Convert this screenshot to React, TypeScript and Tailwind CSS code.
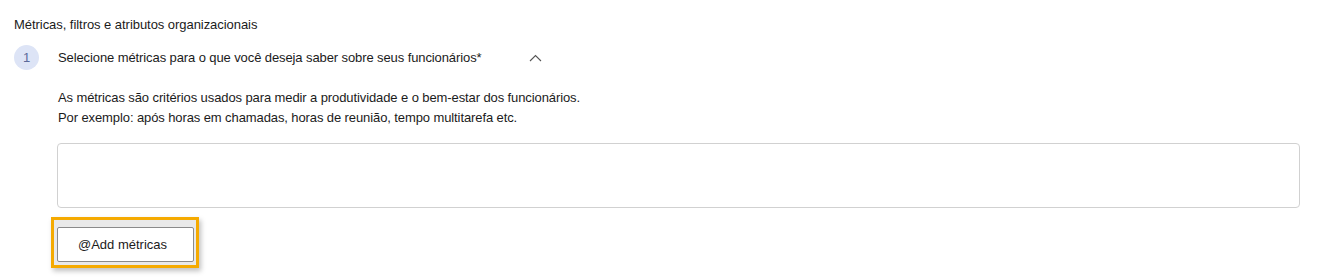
import React from "react";

const ChevronUp = () => (
  <svg width="13" height="8" viewBox="0 0 13 8" fill="none">
    <path d="M1 7L6.5 1.5L12 7" stroke="#555" strokeWidth="1.1" />
  </svg>
);

export default function App() {
  return (
    <div className="w-[1317px] h-[278px] bg-white text-[#1b1b1b] font-['Liberation_Sans',Arial,sans-serif] pl-[14px] pt-[17px] overflow-hidden">
      <div className="text-[13px] leading-[16px] tracking-[-0.05px]">
        Métricas, filtros e atributos organizacionais
      </div>

      <div className="flex items-center mt-[12px] h-[25px]">
        <div className="w-[25px] h-[25px] rounded-full bg-[#dde4f6] flex items-center justify-center text-[13px] text-[#5b6a9a]">
          1
        </div>
        <div className="ml-[19px] text-[13px] leading-[18px] tracking-[-0.1px] w-[471px]">
          Selecione métricas para o que você deseja saber sobre seus funcionários*
        </div>
        <ChevronUp />
      </div>

      <div className="ml-[44px] mt-[18px] text-[13px] leading-[20px] tracking-[-0.1px]">
        <p>As métricas são critérios usados para medir a produtividade e o bem-estar dos funcionários.</p>
        <p>Por exemplo: após horas em chamadas, horas de reunião, tempo multitarefa etc.</p>
      </div>

      <div className="ml-[43px] mt-[15px] w-[1243px] h-[65px] border border-[#d1d1d1] rounded-[4px]" />

      <div className="ml-[37px] mt-[9px] w-[148px] h-[51px] border-[3px] border-[#f5aa00] bg-[#e9e9e9] pt-[7px] pl-[3px] shadow-[2px_3px_5px_rgba(0,0,0,0.25)]">
        <button className="w-[137px] h-[35px] pr-[6px] bg-white border border-[#8a8a8a] rounded-[2px] text-[13px] text-[#1b1b1b]">
          @Add métricas
        </button>
      </div>
    </div>
  );
}
